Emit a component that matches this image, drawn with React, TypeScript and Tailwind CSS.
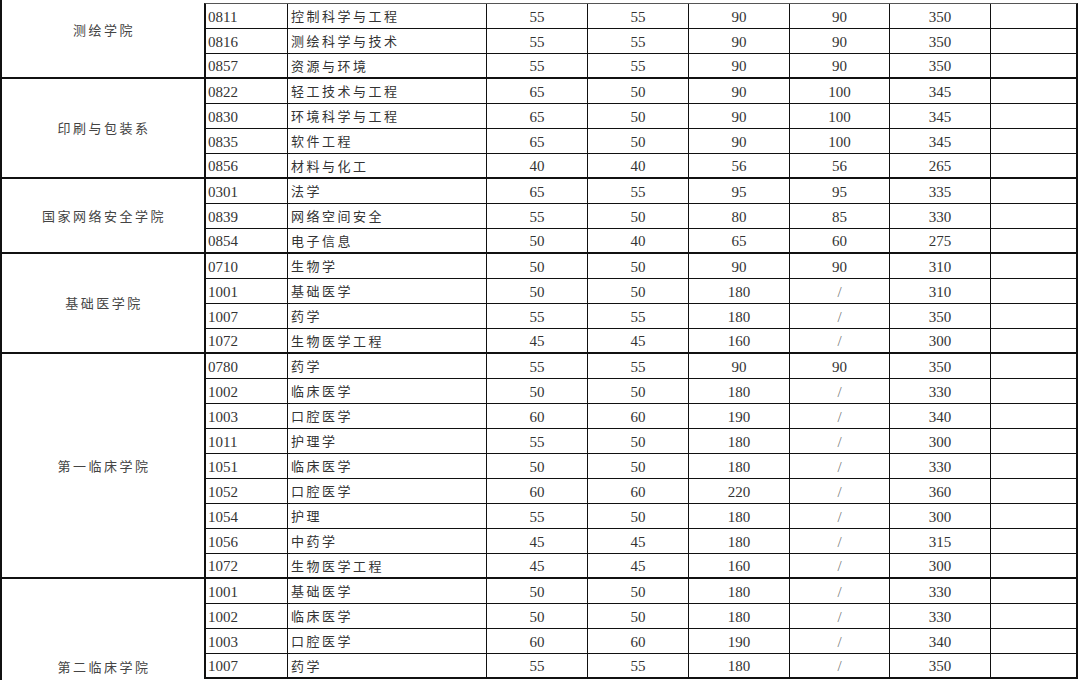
type Row = [string, string, string, string, string, string, string];

interface Group {
  name: string;
  height: string;
  labelClass: string;
  rows: Row[];
}

const groups: Group[] = [
  {
    name: "测绘学院",
    height: "h-[79px] border-b-2",
    labelClass: "pb-[17px]",
    rows: [
      ["0811", "控制科学与工程", "55", "55", "90", "90", "350"],
      ["0816", "测绘科学与技术", "55", "55", "90", "90", "350"],
      ["0857", "资源与环境", "55", "55", "90", "90", "350"],
    ],
  },
  {
    name: "印刷与包装系",
    height: "h-[100px] border-b-2",
    labelClass: "",
    rows: [
      ["0822", "轻工技术与工程", "65", "50", "90", "100", "345"],
      ["0830", "环境科学与工程", "65", "50", "90", "100", "345"],
      ["0835", "软件工程", "65", "50", "90", "100", "345"],
      ["0856", "材料与化工", "40", "40", "56", "56", "265"],
    ],
  },
  {
    name: "国家网络安全学院",
    height: "h-[75px] border-b-2",
    labelClass: "",
    rows: [
      ["0301", "法学", "65", "55", "95", "95", "335"],
      ["0839", "网络空间安全", "55", "50", "80", "85", "330"],
      ["0854", "电子信息", "50", "40", "65", "60", "275"],
    ],
  },
  {
    name: "基础医学院",
    height: "h-[100px] border-b-2",
    labelClass: "",
    rows: [
      ["0710", "生物学", "50", "50", "90", "90", "310"],
      ["1001", "基础医学", "50", "50", "180", "/", "310"],
      ["1007", "药学", "55", "55", "180", "/", "350"],
      ["1072", "生物医学工程", "45", "45", "160", "/", "300"],
    ],
  },
  {
    name: "第一临床学院",
    height: "h-[225px] border-b-2",
    labelClass: "",
    rows: [
      ["0780", "药学", "55", "55", "90", "90", "350"],
      ["1002", "临床医学", "50", "50", "180", "/", "330"],
      ["1003", "口腔医学", "60", "60", "190", "/", "340"],
      ["1011", "护理学", "55", "50", "180", "/", "300"],
      ["1051", "临床医学", "50", "50", "180", "/", "330"],
      ["1052", "口腔医学", "60", "60", "220", "/", "360"],
      ["1054", "护理", "55", "50", "180", "/", "300"],
      ["1056", "中药学", "45", "45", "180", "/", "315"],
      ["1072", "生物医学工程", "45", "45", "160", "/", "300"],
    ],
  },
  {
    name: "第二临床学院",
    height: "h-[175px]",
    labelClass: "",
    rows: [
      ["1001", "基础医学", "50", "50", "180", "/", "330"],
      ["1002", "临床医学", "50", "50", "180", "/", "330"],
      ["1003", "口腔医学", "60", "60", "190", "/", "340"],
      ["1007", "药学", "55", "55", "180", "/", "350"],
    ],
  },
];

const cjk = "font-['Noto_Sans_CJK_SC',sans-serif] text-[13px] tracking-[2.5px]";
const num = "font-['Liberation_Serif',serif] text-[15px] pt-[2px]";
const numCols = ["w-[101px]", "w-[101px]", "w-[101px]", "w-[100px]", "w-[101px]"];

export default function App() {
  return (
    <div className="w-[1080px] h-[680px] overflow-hidden bg-white flex items-start text-[#333]">
      <div className="w-[204px] shrink-0 flex flex-col border-l-2 border-[#111]">
        {groups.map((g) => (
          <div
            key={g.name}
            className={`${g.height} border-[#111] flex items-center justify-center pl-[2px] ${g.labelClass}`}
          >
            <span className={`${cjk} text-[#444]`}>{g.name}</span>
          </div>
        ))}
      </div>

      <div className="w-[874px] shrink-0 mt-[3px] border-t border-l-2 border-r-2 border-[#111] border-t-[#555]">
        {groups.map((g) =>
          g.rows.map((r, i) => {
            const last = i === g.rows.length - 1;
            return (
              <div
                key={g.name + r[0] + i}
                className={`flex h-[25px] border-[#111] ${last ? "border-b-2" : "border-b"}`}
              >
                <div className={`w-[82px] shrink-0 border-r border-[#111] flex items-center pl-[2px] ${num}`}>
                  {r[0]}
                </div>
                <div className={`w-[199px] shrink-0 border-r border-[#111] flex items-center pl-[3px] ${cjk}`}>
                  {r[1]}
                </div>
                {numCols.map((w, k) => (
                  <div
                    key={k}
                    className={`${w} shrink-0 border-r border-[#111] flex items-center justify-center ${num} ${
                      r[k + 2] === "/" ? "text-[#777]" : ""
                    }`}
                  >
                    {r[k + 2]}
                  </div>
                ))}
                <div className="flex-1" />
              </div>
            );
          })
        )}
      </div>
    </div>
  );
}
